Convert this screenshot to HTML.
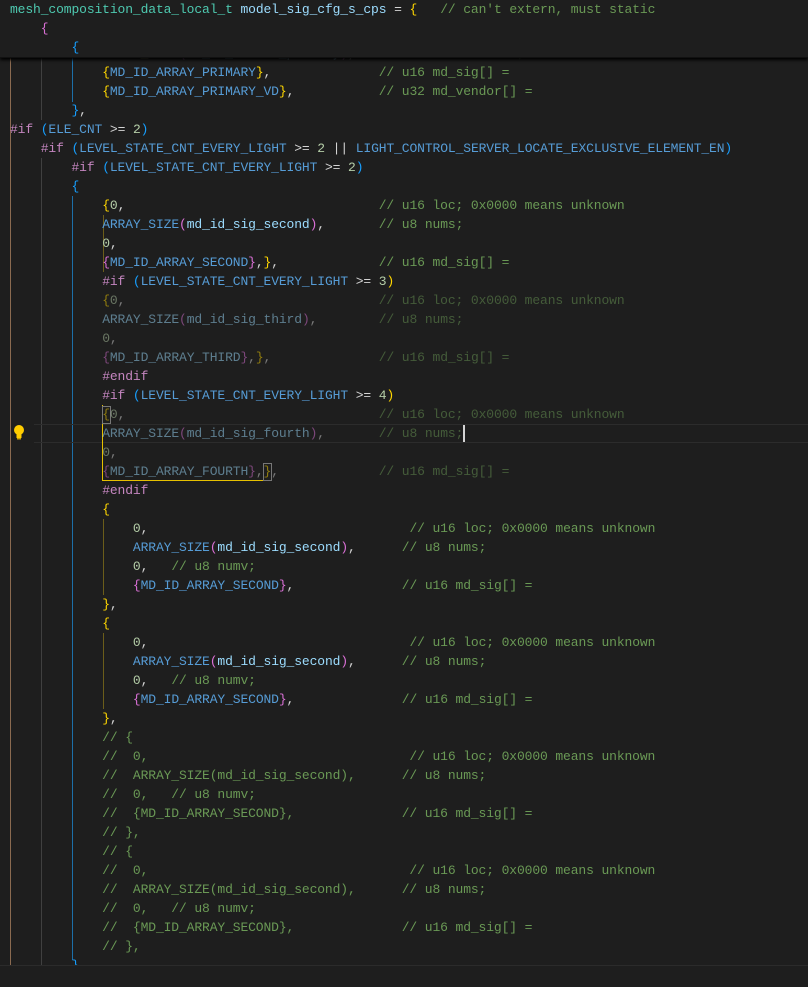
<!DOCTYPE html>
<html><head><meta charset="utf-8"><style>
html,body{margin:0;padding:0;background:#1e1e1e;width:808px;height:986px;overflow:hidden}
.ed{position:absolute;left:0;top:0;width:808px;height:965px;overflow:hidden;background:#1e1e1e}
pre{margin:0;font-family:"Liberation Mono",monospace;font-size:13px;letter-spacing:-0.12px;line-height:19px;color:#d4d4d4;white-space:pre}
.code{position:absolute;left:10px;top:44px}
.sticky{position:absolute;left:0;top:0;width:808px;height:57px;background:#1e1e1e;box-shadow:0 2px 3px #000;z-index:5;border-bottom:1px solid #111}
.sticky pre{position:absolute;left:10px;top:0}
.t{color:#4ec9b0}.v{color:#9cdcfe}.m{color:#569cd6}.n{color:#b5cea8}.c{color:#6a9955}.p{color:#c586c0}
.y{color:#ffd700}.o{color:#da70d6}.b{color:#179fff}.f{color:#dcdcaa}
.d{opacity:.5}
.g{position:absolute;width:1px}
.panel{position:absolute;left:0;top:965px;width:808px;height:21px;background:#1e1e1e;border-top:1px solid #2b2b2b}
</style></head><body>
<div class="ed">
<div class="g" style="left:10px;top:57px;height:908px;background:#8a6a50"></div>
<div class="g" style="left:41px;top:57px;height:63px;background:#404040"></div>
<div class="g" style="left:41px;top:158px;height:807px;background:#404040"></div>
<div class="g" style="left:72px;top:57px;height:45px;background:#1d6fa8"></div>
<div class="g" style="left:72px;top:196px;height:764px;background:#1d6fa8"></div>
<div class="g" style="left:103px;top:215px;height:57px;background:#6b5d1a"></div>
<div class="g" style="left:103px;top:519px;height:76px;background:#6b5d1a"></div>
<div class="g" style="left:103px;top:633px;height:76px;background:#6b5d1a"></div>
<div style="position:absolute;left:34px;top:424px;width:774px;height:17px;border-top:1px solid #2c2c2c;border-bottom:1px solid #2c2c2c"></div>
<div style="position:absolute;left:102px;top:405px;width:162px;height:75px;border-left:1px solid #e6c000;border-bottom:1px solid #e6c000"></div>
<div style="position:absolute;left:102px;top:406px;width:7px;height:16px;border:1px solid #777"></div>
<div style="position:absolute;left:263px;top:463px;width:7px;height:16px;border:1px solid #777"></div>
<div style="position:absolute;left:463px;top:425px;width:2px;height:17px;background:#d4d4d4"></div>
<svg style="position:absolute;left:12px;top:424px" width="14" height="16" viewBox="0 0 14 16"><circle cx="7" cy="6" r="5" fill="#ffcc00"/><rect x="4.5" y="10" width="5" height="4" fill="#ffcc00"/><rect x="5" y="14" width="4" height="1.5" fill="#c9a000"/></svg>
<pre class="code"><span class="d">            <span class="f">ARRAY_SIZE</span><span class="o">(</span><span class="v">md_id_vendor_primary</span><span class="o">)</span>,           <span class="c">// u8 numv;</span></span>
            <span class="y">{</span><span class="m">MD_ID_ARRAY_PRIMARY</span><span class="y">}</span>,              <span class="c">// u16 md_sig[] =</span>
            <span class="y">{</span><span class="m">MD_ID_ARRAY_PRIMARY_VD</span><span class="y">}</span>,           <span class="c">// u32 md_vendor[] =</span>
        <span class="b">}</span>,
<span class="p">#if</span> <span class="b">(</span><span class="m">ELE_CNT</span> &gt;= <span class="n">2</span><span class="b">)</span>
    <span class="p">#if</span> <span class="b">(</span><span class="m">LEVEL_STATE_CNT_EVERY_LIGHT</span> &gt;= <span class="n">2</span> || <span class="m">LIGHT_CONTROL_SERVER_LOCATE_EXCLUSIVE_ELEMENT_EN</span><span class="b">)</span>
        <span class="p">#if</span> <span class="b">(</span><span class="m">LEVEL_STATE_CNT_EVERY_LIGHT</span> &gt;= <span class="n">2</span><span class="b">)</span>
        <span class="b">{</span>
            <span class="y">{</span><span class="n">0</span>,                                 <span class="c">// u16 loc; 0x0000 means unknown</span>
            <span class="m">ARRAY_SIZE</span><span class="o">(</span><span class="v">md_id_sig_second</span><span class="o">)</span>,       <span class="c">// u8 nums;</span>
            <span class="n">0</span>,
            <span class="o">{</span><span class="m">MD_ID_ARRAY_SECOND</span><span class="o">}</span>,<span class="y">}</span>,             <span class="c">// u16 md_sig[] =</span>
            <span class="p">#if</span> <span class="b">(</span><span class="m">LEVEL_STATE_CNT_EVERY_LIGHT</span> &gt;= <span class="n">3</span><span class="y">)</span>
<span class="d">            <span class="y">{</span><span class="n">0</span>,                                 <span class="c">// u16 loc; 0x0000 means unknown</span></span>
<span class="d">            <span class="v">ARRAY_SIZE</span><span class="o">(</span><span class="v">md_id_sig_third</span><span class="o">)</span>,        <span class="c">// u8 nums;</span></span>
<span class="d">            <span class="n">0</span>,</span>
<span class="d">            <span class="o">{</span><span class="v">MD_ID_ARRAY_THIRD</span><span class="o">}</span>,<span class="y">}</span>,              <span class="c">// u16 md_sig[] =</span></span>
            <span class="p">#endif</span>
            <span class="p">#if</span> <span class="b">(</span><span class="m">LEVEL_STATE_CNT_EVERY_LIGHT</span> &gt;= <span class="n">4</span><span class="y">)</span>
<span class="d">            <span class="y">{</span><span class="n">0</span>,                                 <span class="c">// u16 loc; 0x0000 means unknown</span></span>
<span class="d">            <span class="v">ARRAY_SIZE</span><span class="o">(</span><span class="v">md_id_sig_fourth</span><span class="o">)</span>,       <span class="c">// u8 nums;</span></span>
<span class="d">            <span class="n">0</span>,</span>
<span class="d">            <span class="o">{</span><span class="v">MD_ID_ARRAY_FOURTH</span><span class="o">}</span>,<span class="y">}</span>,             <span class="c">// u16 md_sig[] =</span></span>
            <span class="p">#endif</span>
            <span class="y">{</span>
                <span class="n">0</span>,                                  <span class="c">// u16 loc; 0x0000 means unknown</span>
                <span class="m">ARRAY_SIZE</span><span class="o">(</span><span class="v">md_id_sig_second</span><span class="o">)</span>,      <span class="c">// u8 nums;</span>
                <span class="n">0</span>,   <span class="c">// u8 numv;</span>
                <span class="o">{</span><span class="m">MD_ID_ARRAY_SECOND</span><span class="o">}</span>,              <span class="c">// u16 md_sig[] =</span>
            <span class="y">}</span>,
            <span class="y">{</span>
                <span class="n">0</span>,                                  <span class="c">// u16 loc; 0x0000 means unknown</span>
                <span class="m">ARRAY_SIZE</span><span class="o">(</span><span class="v">md_id_sig_second</span><span class="o">)</span>,      <span class="c">// u8 nums;</span>
                <span class="n">0</span>,   <span class="c">// u8 numv;</span>
                <span class="o">{</span><span class="m">MD_ID_ARRAY_SECOND</span><span class="o">}</span>,              <span class="c">// u16 md_sig[] =</span>
            <span class="y">}</span>,
<span class="c">            // {
            //  0,                                  // u16 loc; 0x0000 means unknown
            //  ARRAY_SIZE(md_id_sig_second),      // u8 nums;
            //  0,   // u8 numv;
            //  {MD_ID_ARRAY_SECOND},              // u16 md_sig[] =
            // },
            // {
            //  0,                                  // u16 loc; 0x0000 means unknown
            //  ARRAY_SIZE(md_id_sig_second),      // u8 nums;
            //  0,   // u8 numv;
            //  {MD_ID_ARRAY_SECOND},              // u16 md_sig[] =
            // },</span>
        <span class="b">}</span></pre>
<div class="sticky"><pre><span class="t">mesh_composition_data_local_t</span> <span class="v">model_sig_cfg_s_cps</span> = <span class="y">{</span>   <span class="c">// can't extern, must static</span>
    <span class="o">{</span>
        <span class="b">{</span></pre></div>
</div>
<div class="panel"></div>
</body></html>
